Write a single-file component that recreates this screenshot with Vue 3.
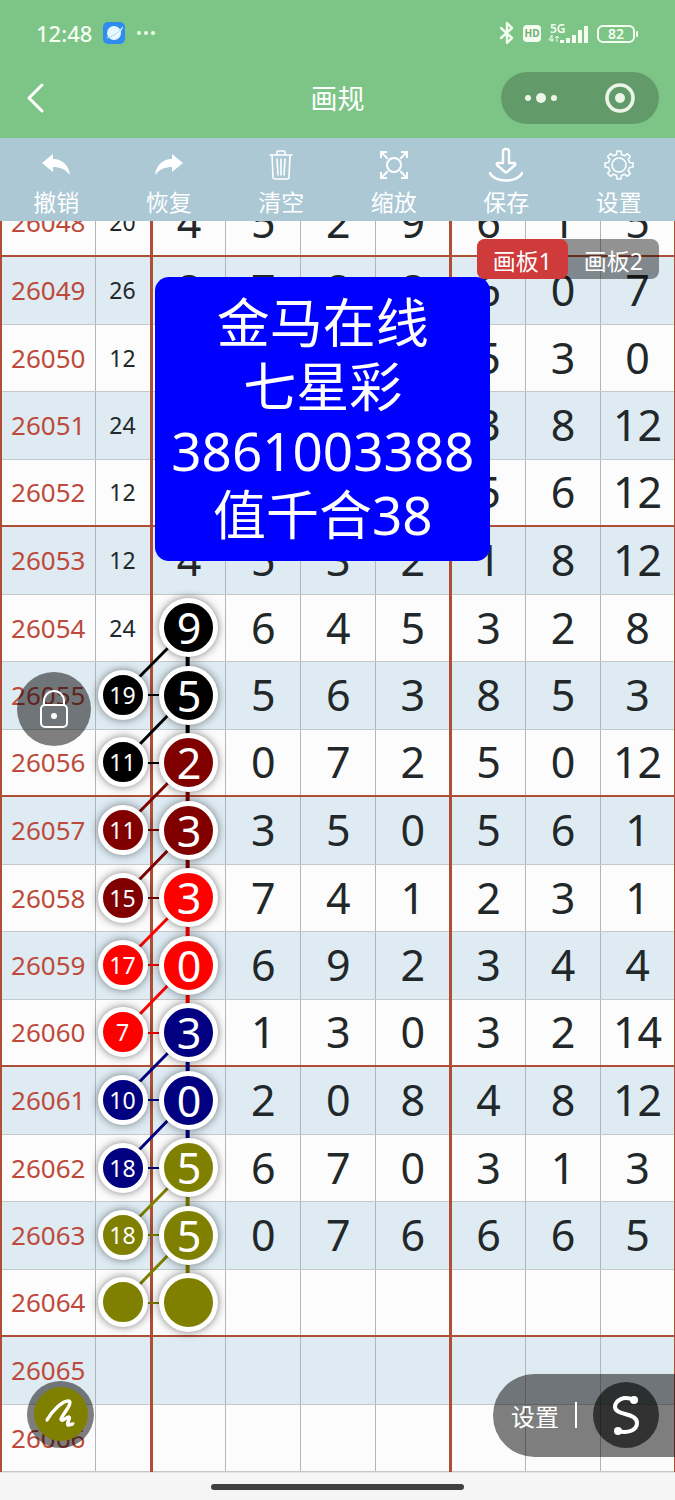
<script setup>
import { computed, ref } from 'vue'

const ROW = 67.5
const FIRST_ISSUE = 26048

const draws = [
  ['20', '4', '5', '2', '9', '6', '1', '5'],
  ['26', '8', '7', '8', '8', '6', '0', '7'],
  ['12', '', '', '', '', '5', '3', '0'],
  ['24', '', '', '', '', '3', '8', '12'],
  ['12', '', '', '', '', '5', '6', '12'],
  ['12', '4', '5', '3', '2', '1', '8', '12'],
  ['24', '9', '6', '4', '5', '3', '2', '8'],
  ['19', '5', '5', '6', '3', '8', '5', '3'],
  ['11', '2', '0', '7', '2', '5', '0', '12'],
  ['11', '3', '3', '5', '0', '5', '6', '1'],
  ['15', '3', '7', '4', '1', '2', '3', '1'],
  ['17', '0', '6', '9', '2', '3', '4', '4'],
  ['7', '3', '1', '3', '0', '3', '2', '14'],
  ['10', '0', '2', '0', '8', '4', '8', '12'],
  ['18', '5', '6', '7', '0', '3', '1', '3'],
  ['18', '5', '0', '7', '6', '6', '6', '5'],
  ['', '', '', '', '', '', '', ''],
  ['', '', '', '', '', '', '', ''],
  ['', '', '', '', '', '', '', ''],
]

const palette = { k: 'black', m: 'maroon', r: 'red', n: 'navy', o: 'olive' }
const smallMarks = { 7: 'k', 8: 'k', 9: 'm', 10: 'm', 11: 'r', 12: 'r', 13: 'n', 14: 'n', 15: 'o', 16: 'o' }
const bigMarks = { 6: 'k', 7: 'k', 8: 'm', 9: 'm', 10: 'r', 11: 'r', 12: 'n', 13: 'n', 14: 'o', 15: 'o', 16: 'o' }

const rows = draws.map((cells, i) => ({
  issue: FIRST_ISSUE + i,
  cells: cells.map((value, c) => {
    const key = c === 0 ? smallMarks[i] : c === 1 ? bigMarks[i] : undefined
    return { value, mark: key && palette[key], size: c === 0 ? 'small' : 'big' }
  }),
}))

const links = computed(() => {
  const out = []
  const y = (i) => Math.round((i + 0.5) * ROW)
  for (let i = 6; i <= 16; i++) {
    if (smallMarks[i]) {
      out.push({ x1: '18%', y1: y(i), x2: '27.8%', y2: y(i), w: 2, color: palette[smallMarks[i]] })
    }
    if (i < 16) {
      const color = palette[bigMarks[i]]
      out.push({ x1: '27.8%', y1: y(i), x2: '27.8%', y2: y(i + 1), w: 4, color })
      out.push({ x1: '27.8%', y1: y(i), x2: '18%', y2: y(i + 1), w: 3, color })
    }
  }
  return out
})

const board = ref(1)
const boards = [1, 2]
</script>

<template>
  <div class="page">
    <header class="top">
      <div class="status">
        <span class="clock">12:48</span>
        <svg class="app-icon" width="24" height="24" viewBox="0 0 24 24" aria-hidden="true">
          <rect x="1" y="1" width="22" height="22" rx="5" fill="#2f8df0" />
          <circle cx="12" cy="12" r="7" fill="#e6f8ff" />
          <path d="M3 17C7 17 17 11 21 5C20 12 11 18 3 17Z" fill="#ffffff" />
          <path d="M5 17C10 16 16 12 19 8" fill="none" stroke="#8fd0f7" stroke-width="1" />
        </svg>
        <svg width="20" height="6" viewBox="0 0 20 6" fill="#effbe9" aria-hidden="true">
          <circle cx="3" cy="3" r="2" /><circle cx="10" cy="3" r="2" /><circle cx="17" cy="3" r="2" />
        </svg>
        <svg class="signals" width="140" height="24" viewBox="0 0 140 24" aria-hidden="true">
          <path d="M2 7L13 17L8 22V2L13 7L2 17" fill="none" stroke="#f4fdf0" stroke-width="2.4" stroke-linejoin="round" stroke-linecap="round" />
          <rect x="24" y="4" width="18" height="17" rx="4" fill="#f4fdf0" />
          <text x="33" y="16" text-anchor="middle" font-size="10" font-weight="700" fill="#6fae78">HD</text>
          <text x="51" y="12" font-size="12" font-weight="600" fill="#f4fdf0">5G</text>
          <path d="M53 21V14L50 19H55M58 21V15M56 17L58 15L60 17" fill="none" stroke="#f4fdf0" stroke-width="1" />
          <path d="M61 22V19H65V22ZM67 22V17H71V22ZM73 22V14H77V22ZM79 22V9H83V22ZM85 22V5H89V22Z" fill="#f4fdf0" />
          <rect x="99" y="5" width="36" height="16" rx="5" fill="none" stroke="#f4fdf0" stroke-width="2" />
          <rect x="137" y="10" width="2" height="6" rx="1" fill="#f4fdf0" />
          <text x="117" y="18" text-anchor="middle" font-size="14" font-weight="600" fill="#f4fdf0">82</text>
        </svg>
      </div>
      <div class="nav">
        <button class="back" type="button" aria-label="返回">
          <svg width="20" height="30" viewBox="0 0 20 30"><path d="M16 2L3 15L16 28" fill="none" stroke="#fff" stroke-width="3" stroke-linecap="round" stroke-linejoin="round" /></svg>
        </button>
        <h1>画规</h1>
        <div class="capsule">
          <button type="button" aria-label="更多">
            <svg width="34" height="12" viewBox="0 0 34 12" fill="#ecf6e8"><circle cx="4" cy="6" r="3" /><circle cx="17" cy="6" r="5" /><circle cx="30" cy="6" r="3" /></svg>
          </button>
          <button type="button" aria-label="关闭">
            <svg width="30" height="30" viewBox="0 0 30 30"><circle cx="15" cy="15" r="13" fill="none" stroke="#ecf6e8" stroke-width="3.6" /><circle cx="15" cy="15" r="5" fill="#ecf6e8" /></svg>
          </button>
        </div>
      </div>
    </header>

    <nav class="tools">
      <button type="button">
        <svg width="36" height="36" viewBox="0 0 36 36"><path d="M4 16L15 7V12C25 12 31 19 32 28C27 22 22 20 15 20V25Z" fill="#fff" /></svg>
        <span>撤销</span>
      </button>
      <button type="button">
        <svg width="36" height="36" viewBox="0 0 36 36"><path d="M32 16L21 7V12C11 12 5 19 4 28C9 22 14 20 21 20V25Z" fill="#fff" /></svg>
        <span>恢复</span>
      </button>
      <button type="button">
        <svg width="36" height="36" viewBox="0 0 36 36" fill="none" stroke="#fff" stroke-width="1.6" stroke-linecap="round" stroke-linejoin="round">
          <path d="M7 8H29M14 8V5Q14 4 15 4H21Q22 4 22 5V8M9 8L10 30Q10 32 12 32H24Q26 32 26 30L27 8M14 12L15 28M18 12V28M22 12L21 28" />
        </svg>
        <span>清空</span>
      </button>
      <button type="button">
        <svg width="36" height="36" viewBox="0 0 36 36" fill="none" stroke="#fff" stroke-width="2" stroke-linecap="square">
          <circle cx="18" cy="18" r="7" />
          <path d="M5 10V5H10M6 6L11 11M26 5H31V10M30 6L25 11M5 26V31H10M6 30L11 25M26 31H31V26M30 30L25 25" />
        </svg>
        <span>缩放</span>
      </button>
      <button type="button">
        <svg width="36" height="36" viewBox="0 0 36 36" fill="none" stroke="#fff" stroke-width="2.4" stroke-linecap="round" stroke-linejoin="round">
          <path d="M15 4Q15 2 18 2Q21 2 21 4V16H26Q28 16 27 18L19 25Q18 26 17 25L9 18Q8 16 10 16H15Z" />
          <path d="M2 26C6 36 30 36 34 26" />
        </svg>
        <span>保存</span>
      </button>
      <button type="button">
        <svg width="36" height="36" viewBox="0 0 36 36" fill="none" stroke="#fff" stroke-width="1.6" stroke-linejoin="round">
          <circle cx="18" cy="18" r="7" />
          <path d="M15.500 7.500L16 4H20L20.500 7.500L23.700 8.800L26.500 6.700L29.300 9.500L27.200 12.300L28.500 15.500L32 16V20L28.500 20.500L27.200 23.700L29.300 26.500L26.500 29.300L23.700 27.200L20.500 28.500L20 32H16L15.500 28.500L12.300 27.200L9.500 29.300L6.700 26.500L8.800 23.700L7.500 20.500L4 20V16L7.500 15.500L8.800 12.300L6.700 9.500L9.500 6.700L12.300 8.800Z" />
        </svg>
        <span>设置</span>
      </button>
    </nav>

    <main class="board">
      <div class="sheet">
        <table>
          <colgroup>
            <col class="c-issue" /><col class="c-sum" />
            <col v-for="n in 7" :key="n" />
          </colgroup>
          <tbody>
            <tr v-for="row in rows" :key="row.issue">
              <th scope="row">{{ row.issue }}</th>
              <td v-for="(cell, c) in row.cells" :key="c">
                <span v-if="cell.mark" class="mark" :class="[cell.size, cell.mark]">{{ cell.value }}</span>
                <template v-else>{{ cell.value }}</template>
              </td>
            </tr>
          </tbody>
        </table>
        <svg class="links" aria-hidden="true">
          <line v-for="(l, i) in links" :key="i" :x1="l.x1" :y1="l.y1" :x2="l.x2" :y2="l.y2" :stroke="l.color" :stroke-width="l.w" />
        </svg>
      </div>

      <div class="note">
        <div>金马在线</div>
        <div>七星彩</div>
        <div>3861003388</div>
        <div>值千合38</div>
      </div>

      <div class="switch">
        <button v-for="b in boards" :key="b" type="button" :class="{ active: board === b }" @click="board = b">画板{{ b }}</button>
      </div>

      <button class="lock" type="button" aria-label="锁定">
        <svg width="32" height="40" viewBox="0 0 32 40" fill="none" stroke="#fff" stroke-width="2">
          <rect x="3" y="16" width="26" height="22" rx="4" />
          <path d="M6 16V12A10 10 0 0 1 26 12V16" />
          <circle cx="16" cy="27" r="3" fill="#fff" stroke="none" />
        </svg>
      </button>

      <button class="pen" type="button" aria-label="画笔">
        <svg width="34" height="34" viewBox="0 0 34 34" fill="none" stroke="#fff" stroke-width="3.4" stroke-linecap="round" stroke-linejoin="round">
          <path d="M3 23C8 14 19 3 25 4C29 6 19 17 17 22C17 26 24 19 25 20C27 21 22 26 24 28L29 27" />
        </svg>
      </button>

      <div class="panel">
        <button class="panel-set" type="button">设置</button>
        <span class="bar"></span>
        <button class="curve" type="button" aria-label="曲线">
          <svg width="30" height="42" viewBox="0 0 30 42" fill="none" stroke="#fff" stroke-width="4">
            <path d="M23 6C12 1 4 7 4 13C4 22 26 18 26 29C26 36 17 40 7 37" />
            <circle cx="23" cy="6" r="4" fill="#fff" stroke="none" />
            <circle cx="7" cy="37" r="4" fill="#fff" stroke="none" />
          </svg>
        </button>
      </div>
    </main>

    <footer class="home"><span></span></footer>
  </div>
</template>

<style>
body {
  background: #f5f5f5;
}
</style>

<style scoped>
.page {
  min-height: 100vh;
  display: flex;
  flex-direction: column;
  font-family: "Noto Sans", "Noto Sans CJK SC", sans-serif;
  color: #222829;
}
button {
  border: 0;
  padding: 0;
  background: none;
  color: inherit;
  font: inherit;
  cursor: pointer;
}
svg {
  display: block;
}
.top {
  background: #7dc487;
  color: #fff;
}
.status {
  height: 66px;
  padding: 0 36px;
  display: flex;
  align-items: center;
  gap: 10px;
}
.clock {
  font-size: 22px;
  font-weight: 500;
  color: #f4fdf0;
}
.signals {
  margin-left: auto;
}
.nav {
  height: 72px;
  padding: 0 16px 8px 26px;
  box-sizing: border-box;
  display: grid;
  grid-template-columns: 1fr auto 1fr;
  align-items: center;
}
.nav h1 {
  margin: 0;
  padding-right: 10px;
  font-family: "Noto Sans CJK SC", sans-serif;
  font-size: 27px;
  line-height: 40px;
  font-weight: 400;
}
.back {
  justify-self: start;
}
.capsule {
  justify-self: end;
  width: 158px;
  height: 52px;
  border-radius: 26px;
  background: rgba(0, 0, 0, 0.21);
  display: flex;
}
.capsule button {
  flex: 1;
  display: grid;
  place-items: center;
}
.tools {
  height: 83px;
  background: #abc8d4;
  display: grid;
  grid-template-columns: repeat(6, 1fr);
}
.tools button {
  padding-top: 9px;
  display: flex;
  flex-direction: column;
  align-items: center;
  color: #fff;
}
.tools span {
  font-family: "Noto Sans CJK SC", sans-serif;
  font-size: 23px;
  line-height: 36px;
}
.board {
  position: relative;
  overflow: hidden;
}
.sheet {
  position: relative;
  margin-top: -32px;
}
table {
  width: calc(100% + 3px);
  margin-left: -1px;
  table-layout: fixed;
  border-collapse: collapse;
  border-left: 3px solid #b04e35;
  border-right: 3px solid #b04e35;
}
.c-issue {
  width: 14%;
}
.c-sum {
  width: 56px;
}
tr {
  height: 67px;
  background: #fcfcfc;
}
tr:nth-child(even) {
  height: 68px;
  background: #deebf3;
}
th,
td {
  padding: 0;
  border-right: 1px solid #b3b6b8;
  border-bottom: 1px solid #c3c8ca;
  text-align: center;
  vertical-align: middle;
  font-size: 43px;
  line-height: 58px;
  font-weight: 400;
}
th {
  font-size: 26px;
  color: #bd4a3b;
}
td:nth-child(2) {
  font-size: 23px;
}
td:nth-child(2),
td:nth-child(6) {
  border-right: 3px solid #b04e35;
}
tr:nth-child(4n + 1) > * {
  border-bottom: 2px solid #b04e35;
}
.links {
  position: absolute;
  inset: 0;
  width: 100%;
  height: 100%;
}
.mark {
  position: relative;
  z-index: 1;
  display: block;
  box-sizing: border-box;
  margin: 0 auto;
  border: 5px solid #fff;
  border-radius: 50%;
  box-shadow: 0 0 8px rgba(0, 0, 0, 0.5);
  color: #fff;
}
.small {
  width: 50px;
  height: 50px;
  line-height: 40px;
}
.big {
  width: 59px;
  height: 59px;
  line-height: 49px;
}
.black {
  background: #000;
}
.maroon {
  background: #800000;
}
.red {
  background: #f00;
}
.navy {
  background: #000080;
}
.olive {
  background: #808000;
}
.note {
  position: absolute;
  z-index: 2;
  top: 56px;
  left: 23%;
  padding: 14px 16px;
  border-radius: 14px;
  background: #00f;
  color: #fff;
  font-size: 53px;
  line-height: 64px;
  text-align: center;
}
.switch {
  position: absolute;
  z-index: 3;
  top: 18px;
  right: 16px;
  display: flex;
  border-radius: 8px;
  background: rgba(0, 0, 0, 0.42);
  color: #fff;
}
.switch button {
  padding: 2px 16px 0;
  height: 40px;
  border-radius: 8px;
  font-size: 23px;
}
.switch .active {
  background: #cf3a3a;
}
.lock,
.pen,
.panel {
  position: absolute;
  z-index: 3;
  background: rgba(0, 0, 0, 0.5);
}
.lock,
.pen,
.curve {
  border-radius: 50%;
  display: grid;
  place-items: center;
}
.lock {
  left: 17px;
  top: 451px;
  width: 74px;
  height: 74px;
}
.pen {
  left: 27px;
  bottom: 24px;
  width: 67px;
  height: 67px;
}
.pen svg {
  padding: 10px;
  border-radius: 50%;
  background: #808000;
}
.panel {
  right: 0;
  bottom: 15px;
  height: 83px;
  padding: 0 16px 0 18px;
  box-sizing: border-box;
  border-radius: 42px 0 0 42px;
  display: flex;
  align-items: center;
  gap: 16px;
  color: #fff;
}
.panel-set {
  font-size: 24px;
}
.bar {
  width: 2px;
  height: 26px;
  background: #fff;
}
.curve {
  width: 66px;
  height: 66px;
  background: rgba(0, 0, 0, 0.6);
}
.home {
  flex: 1;
  min-height: 29px;
  box-sizing: border-box;
  border-top: 1px solid #e4e4e4;
  background: #f5f5f5;
  display: grid;
  place-items: center;
}
.home span {
  width: 253px;
  height: 6px;
  border-radius: 3px;
  background: #404040;
}
</style>
